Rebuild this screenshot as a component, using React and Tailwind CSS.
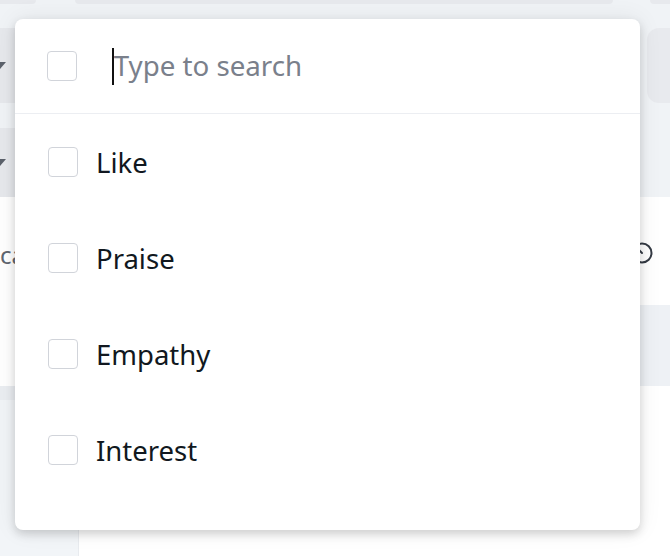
import { useState } from 'react';

const reactions = ['Like', 'Praise', 'Empathy', 'Interest'];

function Box({ checked, onClick }) {
  return (
    <button
      type="button"
      onClick={onClick}
      className={`w-[30px] h-[30px] shrink-0 rounded-[4px] border-[1.7px] ${
        checked ? 'bg-[#2563eb] border-[#2563eb]' : 'bg-white border-[#d1d4da]'
      }`}
    />
  );
}

export default function App() {
  const [picked, setPicked] = useState([]);
  const [query, setQuery] = useState('');

  const toggle = (name) =>
    setPicked((prev) =>
      prev.includes(name) ? prev.filter((p) => p !== name) : [...prev, name]
    );

  return (
    <div className="relative w-[670px] h-[556px] overflow-hidden bg-[#f0f3f6] font-['Noto_Sans',sans-serif]">

      {/* Page behind the menu */}
      <div className="flex h-1">
        <div className="w-[36px] bg-[#e7e9ed] rounded-br-lg" />
        <div className="ml-[39px] w-[538px] bg-[#e7e9ed] rounded-b-lg" />
        <div className="ml-[37px] flex-1 bg-[#e7e9ed] rounded-bl-lg" />
      </div>

      <div className="flex h-[193px]">
        <div className="w-[300px] flex flex-col">
          <div className="mt-[24px] h-[75px] bg-[#e6e8ec] flex items-center">
            <div className="w-0 h-0 border-l-[6px] border-r-[6px] border-t-[7px] border-l-transparent border-r-transparent border-t-[#5b616b] -ml-[6px]" />
          </div>
          <div className="mt-[25px] h-[69px] bg-[#e6e8ec] flex items-center">
            <div className="w-0 h-0 border-l-[6px] border-r-[6px] border-t-[7px] border-l-transparent border-r-transparent border-t-[#5b616b] -ml-[6px]" />
          </div>
        </div>
        <div className="flex-1" />
        <div className="w-[23px] mt-[24px] h-[75px] bg-[#e8eaee] rounded-l-xl" />
      </div>

      <div className="flex h-[189px]">
        <div className="w-[300px] bg-white pt-[42px]">
          <span className="text-[24px] leading-[32px] text-[#5f6670]">calendar</span>
        </div>
        <div className="flex-1 flex flex-col">
          <div className="h-[108px] bg-white flex items-center justify-end pr-[17px] pt-[4px]">
            <svg width="22" height="22" viewBox="0 0 22 22" fill="none" stroke="#343a44" strokeWidth="2" strokeLinecap="round">
              <circle cx="11" cy="11" r="9.5" />
              <path d="M11 11 L7.5 7.5" />
            </svg>
          </div>
          <div className="flex-1 bg-[#eef1f5]" />
        </div>
      </div>

      <div className="flex h-[144px]">
        <div className="w-[300px] flex flex-col">
          <div className="h-[14px] bg-[#eaedf1]" />
          <div className="flex-1 bg-[#f1f4f7]" />
        </div>
        <div className="flex-1 bg-white" />
      </div>

      <div className="flex h-[26px]">
        <div className="w-[79px] bg-[#f2f5f8] border-r border-[#e8ebef]" />
        <div className="flex-1 bg-white" />
      </div>

      {/* Reaction filter menu */}
      <div className="absolute left-[15px] top-[19px] w-[625px] h-[511px] bg-white rounded-[8px] shadow-[0_4px_10px_rgba(0,0,0,0.16),0_0_24px_rgba(0,0,0,0.07)] flex flex-col">

        <div className="h-[95px] flex items-center pl-[32px] border-b-[1.7px] border-[#eceef2]">
          <Box
            checked={picked.length === reactions.length}
            onClick={() =>
              setPicked(picked.length === reactions.length ? [] : reactions)
            }
          />
          <div className="ml-[35px] w-[1.7px] h-[37px] bg-[#111]" />
          <input
            value={query}
            onChange={(e) => setQuery(e.target.value)}
            placeholder="Type to search"
            className="flex-1 outline-none bg-transparent text-[27.7px] text-[#111820] placeholder:text-[#7a808b]"
          />
        </div>

        <div className="flex flex-col">
          {reactions
            .filter((r) => r.toLowerCase().includes(query.toLowerCase()))
            .map((name) => (
              <div key={name} className="h-[96px] flex items-center pl-[33px] gap-[18px]">
                <Box checked={picked.includes(name)} onClick={() => toggle(name)} />
                <span className="text-[27.5px] text-[#111820] pt-[2px]">{name}</span>
              </div>
            ))}
        </div>

      </div>

    </div>
  );
}
